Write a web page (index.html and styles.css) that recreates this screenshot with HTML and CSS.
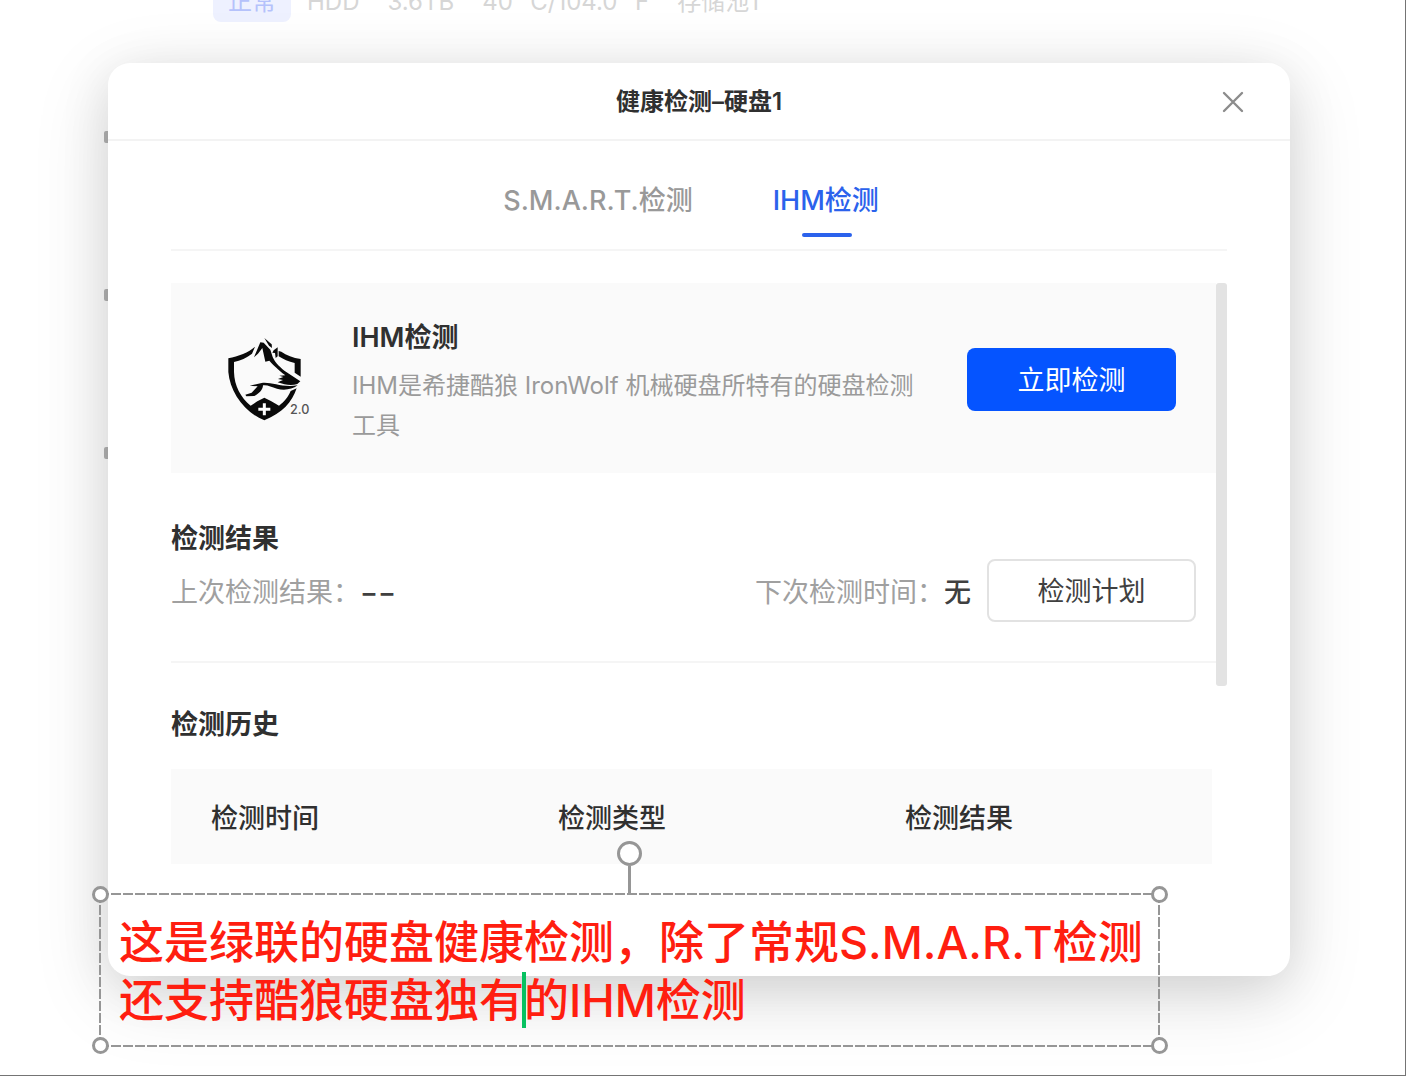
FILE: index.html
```
<!DOCTYPE html>
<html lang="zh-CN">
<head>
  <meta charset="UTF-8">
  <title>健康检测-硬盘1</title>
  <link rel="stylesheet" href="styles.css">
</head>
<body>
  <div class="stage">
    <div class="disk-info">
      <span class="status">正常</span>
      <span>HDD</span>
      <span>3.6TB</span>
      <span>40 °C/104.0 °F</span>
      <span>存储池1</span>
    </div>
    <div class="disk-marks"><i></i><i></i><i></i></div>

    <section class="dialog" role="dialog" aria-labelledby="dialog-title">
      <header class="dialog-header">
        <h1 id="dialog-title">健康检测–硬盘1</h1>
        <button class="close" type="button" aria-label="关闭">
          <svg width="22" height="22" viewBox="0 0 22 22"><path d="M2 2L20 20M20 2L2 20" fill="none" stroke="#8c8c8c" stroke-width="2.4" stroke-linecap="round"/></svg>
        </button>
      </header>

      <div class="dialog-body">
        <nav class="tabs">
          <button class="tab" type="button">S.M.A.R.T.检测</button>
          <button class="tab active" type="button">IHM检测</button>
        </nav>

        <div class="scroll-area">
          <div class="content">
            <div class="card">
              <svg class="logo" viewBox="84 50 252 252">
                <path d="M165 79C146 96 115 108 85 114V155C90 212 130 275 193 300C248 278 276 245 290 204L272 212C264 230 254 243 237 256L214 243L193 232L172 243L152 256C122 232 103 196 102 155V125C121 121 141 112 156 100Z"/>
                <path d="M236 92L244 94C259 105 279 112 302 116V169L284 157V128C266 124 249 117 236 108Z"/>
                <path d="M162 111L181 66L191 67L211 88L218 110C225 127 242 143 260 156L301 183L292 191C276 196 254 194 233 186L249 179L234 176L250 170L238 166L256 165C236 149 218 133 208 121L196 124L187 83L174 100Z"/>
                <path d="M193 53L215 72L216 83L207 76Z"/>
                <path d="M221 90L233 81L233 108L227 113L225 98L217 97Z"/>
                <path d="M149 196L185 188C214 184 247 203 293 195C276 208 251 211 231 205C214 200 202 193 189 195C189 207 178 220 163 227L139 228L136 223L155 217L173 198Z"/>
                <path d="M193 249V285M175 267H211" fill="none" stroke="#fff" stroke-width="9"/>
                <text x="270" y="280" font-size="38" font-weight="500">2.0</text>
              </svg>
              <div class="card-text">
                <h2>IHM检测</h2>
                <p>IHM是希捷酷狼 IronWolf 机械硬盘所特有的硬盘检测工具</p>
              </div>
              <button class="btn primary" type="button">立即检测</button>
            </div>

            <div class="result">
              <h2>检测结果</h2>
              <div class="result-row">
                <p>上次检测结果：<strong>−−</strong></p>
                <p class="next">下次检测时间：<strong>无</strong></p>
                <button class="btn" type="button">检测计划</button>
              </div>
            </div>

            <div class="history">
              <h2>检测历史</h2>
              <table>
                <thead>
                  <tr><th>检测时间</th><th>检测类型</th><th>检测结果</th></tr>
                </thead>
              </table>
            </div>
          </div>
          <div class="scrollbar"></div>
        </div>
      </div>
    </section>

    <!-- selected caption box -->
    <div class="caption">
      <div class="caption-text" contenteditable="true" spellcheck="false" role="textbox" aria-multiline="true" aria-label="文字">这是绿联的硬盘健康检测，除了常规S.M.A.R.T检测<br>还支持酷狼硬盘独有<span class="caret"></span>的IHM检测</div>
      <span class="rotate"></span>
      <span class="handle top left"></span>
      <span class="handle top right"></span>
      <span class="handle bottom left"></span>
      <span class="handle bottom right"></span>
    </div>
  </div>
</body>
</html>
```
FILE: styles.css
```
* { box-sizing: border-box; }
body {
  margin: 0;
  background: #fff;
  color: #303030;
  font-family: Inter, "Noto Sans CJK SC", sans-serif;
}
h1, h2, p { margin: 0; }
button {
  font-family: inherit;
  cursor: pointer;
}
.stage {
  position: relative;
  min-height: 100vh;
  padding: 63px 115px 99px 108px;
  border-right: 1px solid #747474;
  border-bottom: 1px solid #747474;
  overflow: hidden;
}

/* page behind the dialog */
.disk-info {
  position: absolute;
  top: -18px;
  left: 213px;
  display: flex;
  gap: 28px;
  font-size: 24px;
  line-height: 40px;
  color: #d6d6d6;
  white-space: nowrap;
}
.status {
  padding: 0 15px;
  margin-right: -12px;
  border-radius: 8px;
  background: #eef1ff;
  color: #b5c2fb;
}
.disk-marks i {
  position: absolute;
  left: 104px;
  top: 131px;
  width: 8px;
  height: 12px;
  border-radius: 2px;
  background: #b4b4b4;
}
.disk-marks i:nth-child(2) { top: 289px; }
.disk-marks i:nth-child(3) { top: 447px; }

.dialog {
  position: relative;
  min-height: 913px;
  border-radius: 22px;
  background: #fff;
  box-shadow: 0 20px 80px rgba(0,0,0,0.12), 0 10px 50px rgba(0,0,0,0.1);
}
.dialog-header {
  display: grid;
  grid-template-columns: 80px 1fr 80px;
  align-items: center;
  height: 78px;
  padding: 2px 18px 0;
  border-bottom: 2px solid #f3f3f3;
}
.dialog-header h1 {
  grid-column: 2;
  text-align: center;
  font-size: 24px;
  line-height: 36px;
  font-weight: 600;
}
.close {
  justify-self: end;
  display: flex;
  padding: 10px;
  margin-right: 18px;
  border: 0;
  background: none;
}
.dialog-body { padding: 0 63px; }

.tabs {
  display: flex;
  justify-content: center;
  gap: 80px;
  height: 110px;
  padding-right: 16px;
  border-bottom: 2px solid #f5f5f5;
}
.tab {
  position: relative;
  padding: 6px 0 0;
  border: 0;
  background: none;
  color: #999;
  font-size: 27px;
  font-weight: 500;
}
.tab.active { color: #2b62ec; }
.tab.active::after {
  content: "";
  position: absolute;
  left: 50%;
  bottom: 12px;
  width: 50px;
  height: 4px;
  margin-left: -24px;
  border-radius: 2px;
  background: #2b62ec;
}

.scroll-area {
  display: flex;
  padding-top: 32px;
}
.content { flex: 1; }
.scrollbar {
  width: 11px;
  height: 403px;
  border-radius: 3px;
  background: #e3e3e3;
}
h2 {
  font-size: 27px;
  line-height: 40px;
  font-weight: 600;
}

.card {
  display: flex;
  align-items: center;
  height: 190px;
  padding: 2px 40px 0 57px;
  background: #fafafa;
}
.logo {
  width: 84px;
  height: 84px;
  flex-shrink: 0;
  fill: #0a0a0a;
}
.logo text { fill: #555; }
.card-text {
  flex: 1;
  padding-top: 6px;
  margin: 0 42px 0 40px;
}
.card-text p {
  margin-top: 8px;
  color: #9a9a9a;
  font-size: 24px;
  line-height: 40px;
}
.btn {
  width: 209px;
  height: 63px;
  padding: 0 0 2px;
  flex-shrink: 0;
  border: 2px solid #e2e2e2;
  border-radius: 8px;
  background: #fff;
  color: #404040;
  font-size: 27px;
}
.btn.primary {
  border: 0;
  background: #0554ff;
  color: #fff;
}

.result {
  padding: 46px 20px 39px 0;
  border-bottom: 2px solid #f5f5f5;
}
.result-row {
  display: flex;
  align-items: center;
  font-size: 27px;
  color: #a0a0a0;
}
.result-row strong {
  font-weight: 500;
  color: #404040;
}
.next {
  margin-left: auto;
  margin-right: 16px;
}

.history { padding: 42px 4px 0 0; }
table {
  width: 100%;
  margin-top: 24px;
  border-collapse: collapse;
  table-layout: fixed;
  background: #fafafa;
}
th {
  height: 95px;
  padding: 0 0 0 40px;
  text-align: left;
  font-size: 27px;
  font-weight: 500;
}

/* caption with selection frame */
.caption {
  position: absolute;
  left: 99px;
  right: 245px;
  top: 893px;
  padding: 21px 20px 17px;
  background:
    repeating-linear-gradient(90deg, #969696 0 10px, transparent 10px 12px) top / 100% 2px no-repeat,
    repeating-linear-gradient(90deg, #969696 0 10px, transparent 10px 12px) bottom / 100% 2px no-repeat,
    repeating-linear-gradient(#969696 0 10px, transparent 10px 12px) left / 2px 100% no-repeat,
    repeating-linear-gradient(#969696 0 10px, transparent 10px 12px) right / 2px 100% no-repeat;
}
.caption-text {
  color: #ff1e10;
  font-size: 45px;
  font-weight: 500;
  line-height: 58px;
  white-space: nowrap;
  outline: 0;
}
.caret {
  display: inline-block;
  width: 4px;
  height: 56px;
  margin: 0 -2px;
  vertical-align: top;
  background: #07c160;
}
.handle, .rotate {
  position: absolute;
  width: 17px;
  height: 17px;
  border: 3px solid #969696;
  border-radius: 50%;
  background: #fff;
}
.handle.top { top: -7px; }
.handle.bottom { bottom: -7px; }
.handle.left { left: -7px; }
.handle.right { right: -8px; }
.rotate {
  left: 50%;
  top: -52px;
  width: 25px;
  height: 25px;
  margin-left: -13px;
}
.rotate::after {
  content: "";
  position: absolute;
  left: 8px;
  top: 22px;
  width: 3px;
  height: 29px;
  background: #969696;
}
```
